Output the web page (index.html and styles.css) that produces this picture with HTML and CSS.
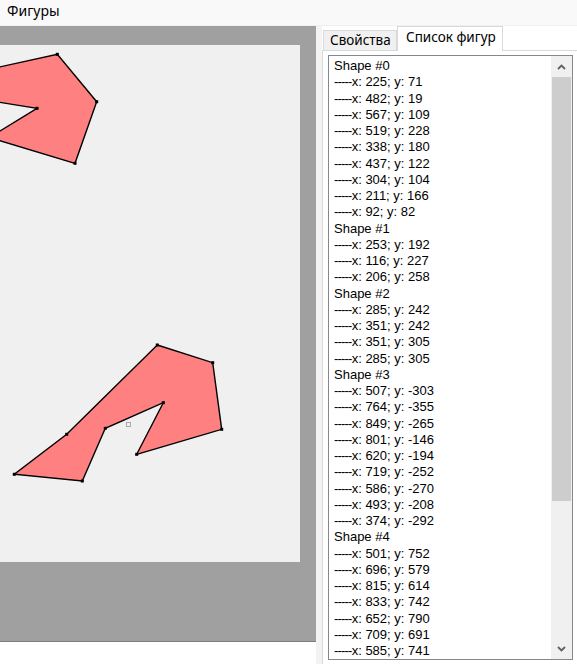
FILE: index.html
```html
<!DOCTYPE html>
<html lang="ru">
<head>
<meta charset="utf-8">
<title>Фигуры</title>
<link rel="stylesheet" href="styles.css">
</head>
<body>
<div class="menubar"><span class="menu-item">Фигуры</span></div>
<div class="main">
  <div class="left">
    <div class="viewport">
      <svg class="canvas" width="300" height="517" viewBox="0 0 300 517">
        <g class="shape">
          <polygon points="-63.9,35.9 57.3,9.3 96.7,56.7 75,118.3 -10.7,92.6 37,63.3 -26.7,53.1 -70.4,85.3 -126.4,41.6"/>
          <polygon points="157.3,300 212.7,317.7 221.7,384.3 136.7,409.3 163.3,357.7 105.3,383.3 82.3,436 14.3,429.3 66.7,389.3"/>
        </g>
        <g class="dots">
          <rect x="55.8" y="7.8" width="3" height="3"/>
          <rect x="95.2" y="55.2" width="3" height="3"/>
          <rect x="73.5" y="116.8" width="3" height="3"/>
          <rect x="35.5" y="61.8" width="3" height="3"/>
          <rect x="155.8" y="298.5" width="3" height="3"/>
          <rect x="211.2" y="316.2" width="3" height="3"/>
          <rect x="220.2" y="382.8" width="3" height="3"/>
          <rect x="135.2" y="407.8" width="3" height="3"/>
          <rect x="161.8" y="356.2" width="3" height="3"/>
          <rect x="103.8" y="381.8" width="3" height="3"/>
          <rect x="80.8" y="434.5" width="3" height="3"/>
          <rect x="12.8" y="427.8" width="3" height="3"/>
          <rect x="65.2" y="387.8" width="3" height="3"/>
        </g>
        <rect class="center" x="126.5" y="377.5" width="4" height="4"/>
      </svg>
    </div>
  </div>
  <div class="splitter"></div>
  <div class="right">
    <div class="tabs">
      <div class="tab">Свойства</div>
      <div class="tab active">Список фигур</div>
    </div>
    <div class="page">
      <div class="listbox">
        <div class="items">
          <div>Shape #0</div>
          <div><span class="d">-----</span>x: 225; y: 71</div>
          <div><span class="d">-----</span>x: 482; y: 19</div>
          <div><span class="d">-----</span>x: 567; y: 109</div>
          <div><span class="d">-----</span>x: 519; y: 228</div>
          <div><span class="d">-----</span>x: 338; y: 180</div>
          <div><span class="d">-----</span>x: 437; y: 122</div>
          <div><span class="d">-----</span>x: 304; y: 104</div>
          <div><span class="d">-----</span>x: 211; y: 166</div>
          <div><span class="d">-----</span>x: 92; y: 82</div>
          <div>Shape #1</div>
          <div><span class="d">-----</span>x: 253; y: 192</div>
          <div><span class="d">-----</span>x: 116; y: 227</div>
          <div><span class="d">-----</span>x: 206; y: 258</div>
          <div>Shape #2</div>
          <div><span class="d">-----</span>x: 285; y: 242</div>
          <div><span class="d">-----</span>x: 351; y: 242</div>
          <div><span class="d">-----</span>x: 351; y: 305</div>
          <div><span class="d">-----</span>x: 285; y: 305</div>
          <div>Shape #3</div>
          <div><span class="d">-----</span>x: 507; y: -303</div>
          <div><span class="d">-----</span>x: 764; y: -355</div>
          <div><span class="d">-----</span>x: 849; y: -265</div>
          <div><span class="d">-----</span>x: 801; y: -146</div>
          <div><span class="d">-----</span>x: 620; y: -194</div>
          <div><span class="d">-----</span>x: 719; y: -252</div>
          <div><span class="d">-----</span>x: 586; y: -270</div>
          <div><span class="d">-----</span>x: 493; y: -208</div>
          <div><span class="d">-----</span>x: 374; y: -292</div>
          <div>Shape #4</div>
          <div><span class="d">-----</span>x: 501; y: 752</div>
          <div><span class="d">-----</span>x: 696; y: 579</div>
          <div><span class="d">-----</span>x: 815; y: 614</div>
          <div><span class="d">-----</span>x: 833; y: 742</div>
          <div><span class="d">-----</span>x: 652; y: 790</div>
          <div><span class="d">-----</span>x: 709; y: 691</div>
          <div><span class="d">-----</span>x: 585; y: 741</div>
        </div>
        <div class="scrollbar">
          <div class="sb-btn">
            <svg width="9" height="6" viewBox="0 0 9 6"><polyline points="1,5 4.5,1.5 8,5"/></svg>
          </div>
          <div class="sb-thumb"></div>
          <div class="sb-track"></div>
          <div class="sb-btn">
            <svg width="9" height="6" viewBox="0 0 9 6"><polyline points="1,1 4.5,4.5 8,1"/></svg>
          </div>
        </div>
      </div>
    </div>
  </div>
</div>
</body>
</html>
```

FILE: styles.css
```css
* { box-sizing: border-box; }
html, body {
  margin: 0;
  padding: 0;
}
body {
  width: 577px;
  height: 664px;
  overflow: hidden;
  background: #ffffff;
  font-family: "Noto Sans", "Open Sans", sans-serif;
  color: #000;
}
.menubar {
  height: 26px;
  background: #f9f9f9;
  border-bottom: 1px solid #f0f0f0;
  display: flex;
  align-items: center;
  padding-left: 7px;
}
.menu-item {
  font-size: 14px;
  line-height: 18px;
  padding-bottom: 3px;
}
.main {
  display: flex;
  height: 638px;
}
.left {
  width: 316px;
  flex: none;
  display: flex;
  flex-direction: column;
}
.viewport {
  height: 616px;
  background: #a0a0a0;
  border-bottom: 1px solid #7d7d7d;
  padding-top: 19px;
  overflow: hidden;
}
.canvas {
  display: block;
  background: #f0f0f0;
  overflow: hidden;
}
.shape polygon {
  fill: #ff8080;
  stroke: #000;
  stroke-width: 1.4;
  stroke-linejoin: miter;
}
.dots rect { fill: #000; }
.center {
  fill: none;
  stroke: #a8a8a8;
  stroke-width: 1;
}
.splitter {
  width: 6px;
  flex: none;
  background: #f3f3f3;
}
.right {
  flex: 1;
  display: flex;
  flex-direction: column;
  background: #ffffff;
}
.tabs {
  height: 24px;
  display: flex;
  align-items: flex-end;
  padding-left: 1px;
  position: relative;
  z-index: 1;
  background: #ffffff;
}
.tab {
  height: 20px;
  padding: 0 0 0 6px;
  font-size: 13.5px;
  line-height: 18px;
  background: #f0f0f0;
  border: 1px solid #d9d9d9;
  border-bottom: none;
  color: #000;
  width: 74px;
  white-space: nowrap;
}
.tab.active {
  height: 25px;
  width: 106px;
  margin-bottom: -1px;
  background: #ffffff;
  border-left: 1px solid #d9d9d9;
  padding-left: 8px;
  line-height: 20px;
}
.page {
  flex: 1;
  border-top: 1px solid #d9d9d9;
  border-left: 1px solid #d9d9d9;
  padding: 4px 0 0 5px;
  background: #ffffff;
}
.listbox {
  width: 245px;
  height: 605px;
  border: 1px solid #828790;
  display: flex;
  background: #fff;
  overflow: hidden;
}
.items {
  flex: 1;
  padding: 2px 0 0 5px;
  font-family: "Liberation Sans", Arial, sans-serif;
  font-size: 13px;
  line-height: 16.25px;
  white-space: nowrap;
  overflow: hidden;
}
.d {
  letter-spacing: -0.8px;
}
.scrollbar {
  width: 21px;
  flex: none;
  display: flex;
  flex-direction: column;
  background: #f0f0f0;
}
.sb-btn {
  height: 21px;
  display: flex;
  align-items: center;
  justify-content: center;
}
.sb-btn svg polyline {
  fill: none;
  stroke: #606060;
  stroke-width: 1.8;
}
.sb-thumb {
  height: 424px;
  margin: 0 1px 0 1px;
  background: #cdcdcd;
}
.sb-track { flex: 1; }
```
